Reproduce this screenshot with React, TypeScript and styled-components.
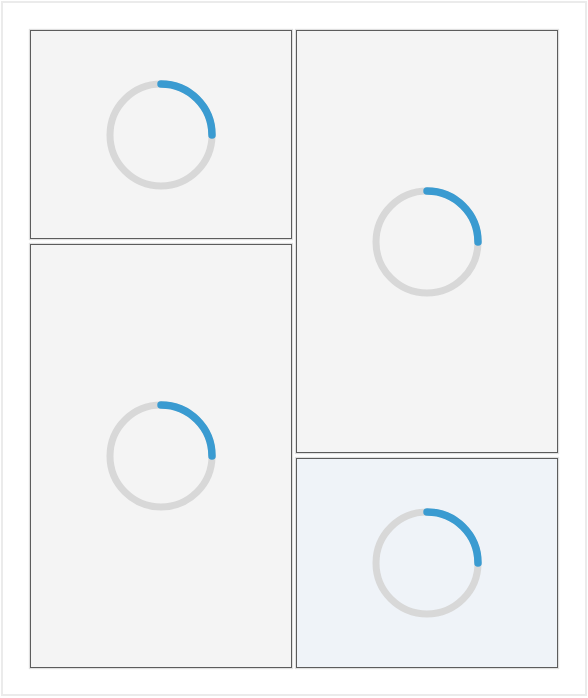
import * as React from 'react';
import styled, { createGlobalStyle } from 'styled-components';

const GlobalStyle = createGlobalStyle`
    html, body {
        margin: 0;
        padding: 0;
        background: #ffffff;
        font-family: "Liberation Sans", Arial, sans-serif;
    }
    * {
        box-sizing: border-box;
    }
`;

const Frame = styled.div`
    width: 586px;
    height: 695px;
    margin: 1px;
    border: 2px solid #ebebeb;
    padding: 27px 27px 26px 27px;
    display: grid;
    grid-template-columns: 1fr 1fr;
    column-gap: 4px;
`;

const Column = styled.div`
    display: flex;
    flex-direction: column;
    gap: 5px;
    min-height: 0;
`;

const Card = styled.div<{ $height?: number; $tint?: boolean }>`
    ${props => props.$height ? `height: ${props.$height}px; flex: none;` : 'flex: 1;'}
    background: ${props => props.$tint ? '#eff3f8' : '#f4f4f4'};
    border: 1px solid #5c5c5c;
    box-shadow: 0 0 1px 1px rgba(0, 0, 0, 0.12);
    display: flex;
    align-items: center;
    justify-content: center;
`;

const SpinnerSvg = styled.svg`
    width: 110px;
    height: 110px;
    display: block;
`;

const Spinner = () => {
    const r = 51;
    const c = 55;
    return (
        <SpinnerSvg viewBox="0 0 110 110">
            <circle cx={c} cy={c} r={r} fill="none" stroke="#d8d8d8" strokeWidth={7} />
            <path
                d={`M ${c} ${c - r} A ${r} ${r} 0 0 1 ${c + r} ${c}`}
                fill="none"
                stroke="#3a9bd1"
                strokeWidth={7.5}
                strokeLinecap="round"
            />
        </SpinnerSvg>
    );
};

const App = () => {
    return (
        <>
            <GlobalStyle />
            <Frame>
                <Column>
                    <Card $height={209}><Spinner /></Card>
                    <Card><Spinner /></Card>
                </Column>
                <Column>
                    <Card><Spinner /></Card>
                    <Card $height={210} $tint><Spinner /></Card>
                </Column>
            </Frame>
        </>
    );
};

export default App;
